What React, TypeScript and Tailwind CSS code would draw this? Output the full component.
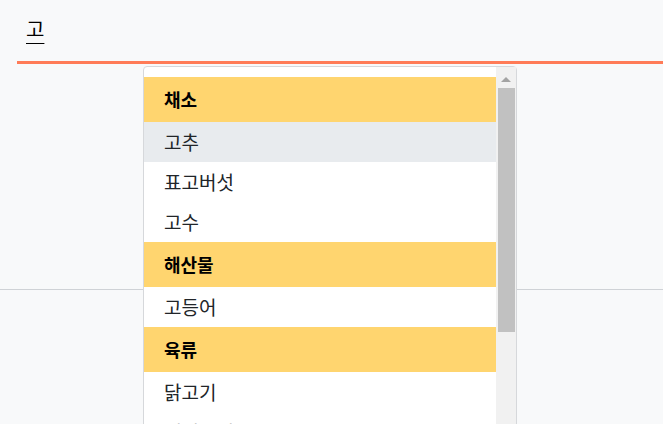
import React from "react";

type Row = { label: string; group?: boolean; active?: boolean };

const rows: Row[] = [
  { label: "채소", group: true },
  { label: "고추", active: true },
  { label: "표고버섯" },
  { label: "고수" },
  { label: "해산물", group: true },
  { label: "고등어" },
  { label: "육류", group: true },
  { label: "닭고기" },
  { label: "돼지고기" },
  { label: "소고기" },
];

export default function App() {
  return (
    <div
      className="relative h-[424px] overflow-hidden bg-[#f8f9fa] text-[#212529]"
      style={{ fontFamily: '"Noto Sans CJK KR", "Noto Sans", sans-serif' }}
    >
      {/* Search input */}
      <div className="pl-[17px]">
        <div className="h-[64px] border-b-[3px] border-[#ff7b57] pl-[9px] pt-[15px]">
          <span className="text-[20px] leading-[28px] text-black underline underline-offset-[6px] decoration-1">
            고
          </span>
        </div>
      </div>

      {/* Content below, with divider */}
      <div className="h-[226px] border-b border-[#cfd2d6]" />

      {/* Dropdown */}
      <div className="absolute left-[143px] top-[66px] w-[374px] rounded-[4px] border border-[#d6d8db] bg-white flex">
        <div className="flex-1 pt-[10px]">
          {rows.map((r) =>
            r.group ? (
              <div
                key={r.label}
                className="h-[45px] flex items-center bg-[#ffd56f] pl-[20px] text-[18px] font-bold text-black"
              >
                {r.label}
              </div>
            ) : (
              <div
                key={r.label}
                className={`h-[40px] flex items-center pl-[20px] text-[19px] ${
                  r.active ? "bg-[#e8ebee]" : "bg-white"
                }`}
              >
                {r.label}
              </div>
            )
          )}
        </div>
        {/* Scrollbar */}
        <div className="w-[20px] bg-[#f1f1f1] flex flex-col items-center pt-[9px]">
          <svg width="10" height="6" viewBox="0 0 10 6">
            <path d="M0 6 L5 1 L10 6 Z" fill="#a3a3a3" />
          </svg>
          <div className="mt-[6px] w-[17px] h-[244px] bg-[#c1c1c1]" />
        </div>
      </div>
    </div>
  );
}
